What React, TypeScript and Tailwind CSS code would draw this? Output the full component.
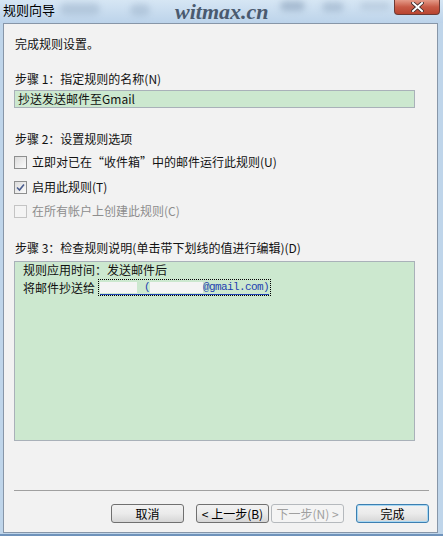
import React from "react";

const cjk = { fontFamily: '"Noto Sans CJK SC", "Noto Sans", sans-serif' };
const mono = { fontFamily: '"Liberation Mono", "DejaVu Sans Mono", monospace' };

function CheckBox({ checked, disabled }: { checked?: boolean; disabled?: boolean }) {
  return (
    <span
      className={
        "flex h-[13px] w-[13px] shrink-0 items-center justify-center border " +
        (disabled
          ? "border-[#c4c4c4] bg-[#f4f4f4]"
          : "border-[#8e8f8f] bg-gradient-to-br from-[#dcdcdc] to-[#fbfbfb]")
      }
    >
      {checked && (
        <svg width="9" height="9" viewBox="0 0 9 9">
          <path d="M1 4.5 L3.5 7 L8 1.5" fill="none" stroke="#4a5d8f" strokeWidth="1.6" />
        </svg>
      )}
    </span>
  );
}

function Btn({
  children,
  primary,
  disabled,
}: {
  children: React.ReactNode;
  primary?: boolean;
  disabled?: boolean;
}) {
  return (
    <div
      className={
        "flex h-[19px] w-[73px] items-center justify-center rounded-[3px] border text-[12px] leading-none " +
        (disabled
          ? "border-[#b5b9bd] bg-[#f4f4f4] text-[#a0a0a0]"
          : primary
          ? "border-[#3c7fb1] bg-gradient-to-b from-[#f2f2f2] via-[#ebebeb] to-[#d6d6d6] text-black shadow-[inset_0_0_0_1px_#a8d8f3]"
          : "border-[#707070] bg-gradient-to-b from-[#f2f2f2] via-[#ebebeb] to-[#d6d6d6] text-black")
      }
    >
      {children}
    </div>
  );
}

export default function App() {
  return (
    <div className="relative h-[536px] w-[443px] overflow-hidden bg-[#bfd5ea]" style={cjk}>
      {/* Title bar */}
      <div className="relative h-[23px] bg-gradient-to-b from-[#d6e6f4] to-[#bcd3ea]">
        <div className="absolute left-[60px] top-[3px] h-[12px] w-[40px] rounded-full bg-[#8fa6bf] opacity-40 blur-[3px]" />
        <div className="absolute left-[130px] top-[4px] h-[12px] w-[20px] rounded-full bg-[#8fa6bf] opacity-40 blur-[3px]" />
        <div className="absolute left-[280px] top-[1px] h-[10px] w-[25px] rounded-full bg-[#7d95b0] opacity-50 blur-[3px]" />
        <div className="absolute left-[322px] top-[2px] h-[10px] w-[22px] rounded-full bg-[#8fa6bf] opacity-50 blur-[3px]" />
        <div className="absolute left-[360px] top-[2px] h-[8px] w-[30px] rounded-full bg-[#9cb0c6] opacity-40 blur-[3px]" />
        <span className="absolute left-[3px] top-[2px] text-[13px] leading-[16px] text-black">规则向导</span>
        <span
          className="absolute left-[175px] top-[0px] text-[22px] font-bold italic leading-[23px] text-[#4a5a6f]"
          style={{ fontFamily: '"Liberation Serif", "DejaVu Serif", serif' }}
        >
          witmax.cn
        </span>
        <div className="absolute left-[394px] top-0 flex h-[15px] w-[46px] items-center justify-center rounded-b-[4px] border border-t-0 border-[#6d3a34] bg-gradient-to-b from-[#e49a88] via-[#c75a46] to-[#b8442f]">
          <svg width="13" height="10" viewBox="0 0 13 10">
            <path d="M2 1 L11 9 M11 1 L2 9" stroke="#3a2a2a" strokeWidth="3.6" strokeLinecap="square" />
            <path d="M2 1 L11 9 M11 1 L2 9" stroke="#ffffff" strokeWidth="2" strokeLinecap="square" />
          </svg>
        </div>
      </div>

      {/* Client area */}
      <div className="ml-[3px] flex h-[510px] w-[435px] flex-col border border-[#8796a8] bg-[#f2f2f2] pl-[10px] pr-[8px] pt-[12px] text-[12px] text-[#111]">
        <div className="pl-[1px] leading-[16px]">完成规则设置。</div>

        <div className="mt-[19px] pl-[1px] leading-[16px]">步骤 1：指定规则的名称(N)</div>
        <div className="mt-[3px] flex h-[18px] w-[401px] items-center border border-[#a9b1b9] bg-[#cce8cf] pl-[3px] leading-[16px]">
          抄送发送邮件至Gmail
        </div>

        <div className="mt-[23px] pl-[1px] leading-[16px]">步骤 2：设置规则选项</div>
        <div className="mt-[7px] flex h-[16px] items-center gap-[5px]">
          <CheckBox />
          <span className="leading-[16px]">立即对已在“收件箱”中的邮件运行此规则(U)</span>
        </div>
        <div className="mt-[9px] flex h-[16px] items-center gap-[5px]">
          <CheckBox checked />
          <span className="leading-[16px]">启用此规则(T)</span>
        </div>
        <div className="mt-[8px] flex h-[16px] items-center gap-[5px]">
          <CheckBox disabled />
          <span className="leading-[16px] text-[#8d8d8d]">在所有帐户上创建此规则(C)</span>
        </div>

        <div className="mt-[21px] pl-[1px] leading-[16px]">步骤 3：检查规则说明(单击带下划线的值进行编辑)(D)</div>
        <div className="mt-[5px] h-[180px] w-[401px] border border-[#a9b1b9] bg-[#cce8cf] pl-[8px]">
          <div className="leading-[16px]">规则应用时间：发送邮件后</div>
          <div className="mt-[1px] flex items-center leading-[16px]">
            <span>将邮件抄送给</span>
            <span className="ml-[3px] flex h-[17px] items-center border border-dotted border-black px-[1px]">
              <span
                className="flex h-[14px] items-center border-b border-[#1d3fb0] text-[11px] tracking-[-0.6px] text-[#1d3fb0]"
                style={mono}
              >
                <span className="h-[11px] w-[37px] bg-[#f4f4f4]" />
                <span className="ml-[7px]">(</span>
                <span className="h-[11px] w-[53px] bg-[#f4f4f4]" />
                <span>@gmail.com)</span>
              </span>
            </span>
          </div>
        </div>

        <div className="mt-[49px] h-px bg-[#a0a0a0]" />

        <div className="mt-[13px] flex justify-end">
          <Btn>取消</Btn>
          <div className="ml-[12px]">
            <Btn>&lt; 上一步(B)</Btn>
          </div>
          <div className="ml-[2px]">
            <Btn disabled>下一步(N) &gt;</Btn>
          </div>
          <div className="ml-[12px]">
            <Btn primary>完成</Btn>
          </div>
        </div>
      </div>
      <div className="absolute bottom-0 left-0 h-[2px] w-full bg-[#6f93bb]" />
    </div>
  );
}
